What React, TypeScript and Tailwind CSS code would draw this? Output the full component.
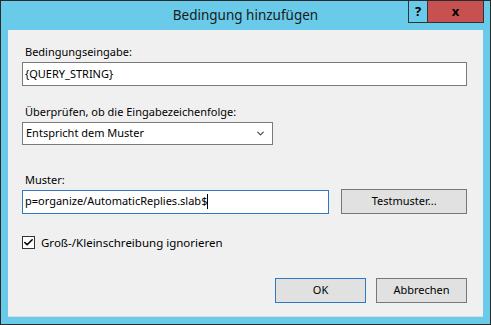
import { Check, ChevronDown } from "lucide-react";

const font = { fontFamily: '"Noto Sans", "Open Sans", sans-serif' };

const App = () => {
  return (
    <div
      className="w-[491px] h-[325px] border border-[#2b2b2b] bg-[#69cbe9] flex flex-col text-[11px] text-black relative"
      style={font}
    >
      {/* Titelleiste */}
      <div className="h-[29px] shrink-0 flex items-center justify-center pb-[1px]">
        <span className="text-[13.5px] text-[#1a1a1a]">Bedingung hinzufügen</span>
      </div>
      <div className="absolute top-0 right-[6px] flex h-[22px]">
        <div className="w-[20px] h-full border border-[#333] border-t-0 flex items-center justify-center font-bold text-[13px]">
          ?
        </div>
        <div className="w-[56px] h-full border border-[#333] border-t-0 border-l-0 bg-[#c75050] flex items-center justify-center font-bold text-[13px]">
          x
        </div>
      </div>

      {/* Inhalt */}
      <div className="mx-[7px] mb-[7px] flex-1 bg-[#f0f0f0] border-b border-[#dcdcdc] pl-[14px] pr-[16px] pt-[14px] flex flex-col">
        <div className="leading-[16px] pl-[3px]">Bedingungseingabe:</div>
        <div className="mt-[2px] h-[24px] bg-white border border-[#7a7a7a] flex items-center px-[2px]">
          {"{QUERY_STRING}"}
        </div>

        <div className="mt-[18px] leading-[16px] pl-[3px]">Überprüfen, ob die Eingabezeichenfolge:</div>
        <div className="mt-[2px] h-[23px] w-[251px] bg-white border border-[#7a7a7a] flex items-center justify-between pl-[3px] pr-[6px]">
          <span>Entspricht dem Muster</span>
          <ChevronDown className="w-[11px] h-[11px] text-[#555]" strokeWidth={3} />
        </div>

        <div className="mt-[27px] leading-[16px] pl-[3px]">Muster:</div>
        <div className="mt-[1px] flex items-center gap-[12px]">
          <div className="h-[24px] w-[308px] bg-white border border-[#2f78c4] flex items-center px-[2px]">
            <span>p=organize/AutomaticReplies.slab$</span>
            <span className="w-px h-[15px] bg-black" />
          </div>
          <div className="h-[25px] w-[126px] bg-[#e1e1e1] border border-[#777] flex items-center justify-center">
            Testmuster...
          </div>
        </div>

        <div className="mt-[20px] flex items-center gap-[6px]">
          <div className="w-[13px] h-[13px] bg-white border border-[#333] flex items-center justify-center">
            <Check className="w-[11px] h-[11px]" strokeWidth={3.5} />
          </div>
          <span className="text-[11.5px]">Groß-/Kleinschreibung ignorieren</span>
        </div>

        <div className="mt-auto mb-[13px] flex justify-end gap-[10px]">
          <div className="h-[25px] w-[91px] bg-[#e1e1e1] border border-[#2f78c4] flex items-center justify-center">
            OK
          </div>
          <div className="h-[25px] w-[91px] bg-[#e1e1e1] border border-[#777] flex items-center justify-center">
            Abbrechen
          </div>
        </div>
      </div>
    </div>
  );
};

export default App;
